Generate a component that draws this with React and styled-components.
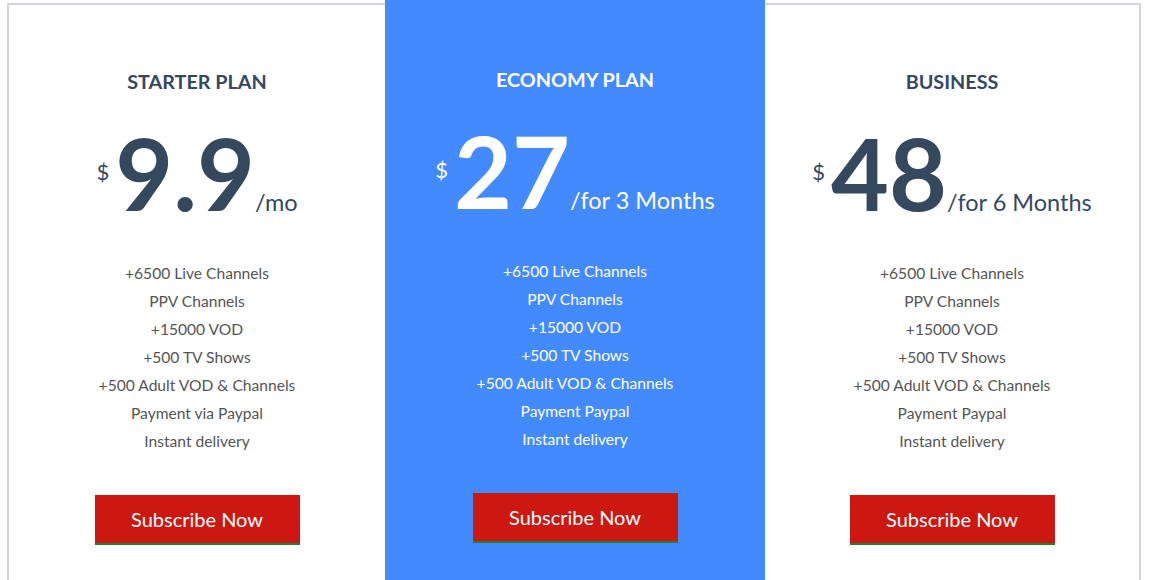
import React from 'react';
import styled, {createGlobalStyle} from 'styled-components';

const DARK = "#34495e"
const BLUE = "#448aff"
const RED = "#cd1711"
const GREEN = "#1f7f3a"

const GlobalStyle = createGlobalStyle`
    html, body {
        margin: 0;
        padding: 0;
        background: #ffffff;
        overflow: hidden;
    }
    body {
        font-family: Lato, "Open Sans", sans-serif;
    }
`

const Pricing = styled.section`
    box-sizing: border-box;
    width: 1134px;
    margin: 3px 0 0 7px;
    border: 2px solid #d4d4db;
    display: grid;
    grid-template-columns: 376px 380px 1fr;
    min-height: 640px;
`

const Plan = styled.div`
    text-align: center;
    padding: ${p => p.featured ? "67px" : "64px"} 0 0;
    margin-top: ${p => p.featured ? "-5px" : "0"};
    background: ${p => p.featured ? BLUE : "transparent"};
    color: ${p => p.featured ? "#ffffff" : DARK};
`

const Title = styled.h3`
    margin: 0;
    font-size: 19.8px;
    font-weight: 700;
    line-height: 24px;
`

const PriceRow = styled.div`
    display: flex;
    justify-content: center;
    align-items: baseline;
    margin-top: 29px;
`

const Currency = styled.span`
    align-self: flex-start;
    font-size: 22px;
    line-height: 22px;
    margin-top: 39px;
    margin-right: 6px;
`

const Amount = styled.span`
    font-size: 100px;
    font-weight: 700;
    line-height: 100px;
`

const Period = styled.span`
    font-size: 23.5px;
`

const Features = styled.ul`
    list-style: none;
    margin: 37px 0 0;
    padding: 0;
    font-size: 15.6px;
    line-height: 28px;
    color: ${p => p.featured ? "#ffffff" : "#555555"};
`

const SubscribeButton = styled.a`
    display: inline-flex;
    align-items: center;
    justify-content: center;
    box-sizing: border-box;
    width: 205px;
    height: 50px;
    margin-top: 40px;
    background: ${RED};
    border-bottom: 2px solid ${GREEN};
    color: #ffffff;
    font-size: 20px;
    text-decoration: none;
    cursor: pointer;
`

const plans = [
    {
        title: "STARTER PLAN",
        price: "9.9",
        period: "/mo",
        features: ["+6500 Live Channels", "PPV Channels", "+15000 VOD", "+500 TV Shows", "+500 Adult VOD & Channels", "Payment via Paypal", "Instant delivery"]
    },
    {
        title: "ECONOMY PLAN",
        price: "27",
        period: "/for 3 Months",
        featured: true,
        features: ["+6500 Live Channels", "PPV Channels", "+15000 VOD", "+500 TV Shows", "+500 Adult VOD & Channels", "Payment Paypal", "Instant delivery"]
    },
    {
        title: "BUSINESS",
        price: "48",
        period: "/for 6 Months",
        features: ["+6500 Live Channels", "PPV Channels", "+15000 VOD", "+500 TV Shows", "+500 Adult VOD & Channels", "Payment Paypal", "Instant delivery"]
    }
]

export default function App() {
    return (
        <>
            <GlobalStyle />
            <Pricing>
                {plans.map(plan => (
                    <Plan key={plan.title} featured={plan.featured}>
                        <Title>{plan.title}</Title>
                        <PriceRow>
                            <Currency>$</Currency>
                            <Amount>{plan.price}</Amount>
                            <Period>{plan.period}</Period>
                        </PriceRow>
                        <Features featured={plan.featured}>
                            {plan.features.map(f => <li key={f}>{f}</li>)}
                        </Features>
                        <SubscribeButton>Subscribe Now</SubscribeButton>
                    </Plan>
                ))}
            </Pricing>
        </>
    )
}
